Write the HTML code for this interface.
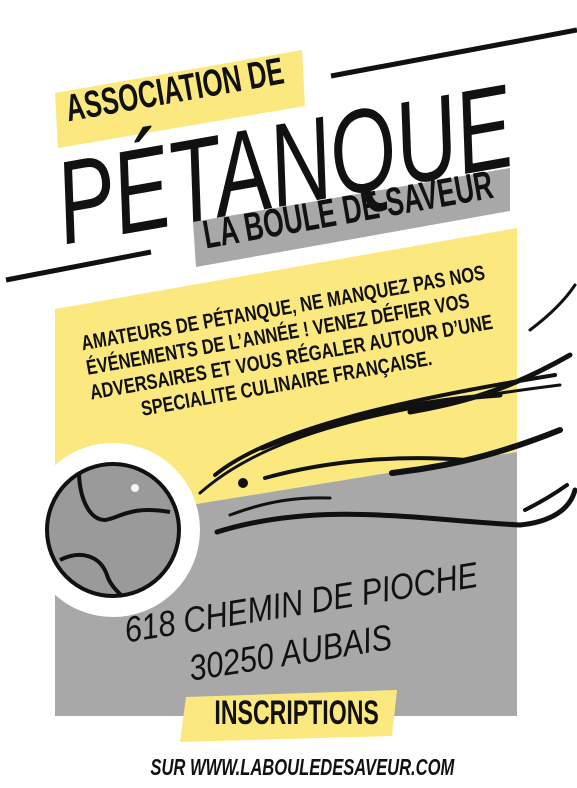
<!DOCTYPE html>
<html><head><meta charset="utf-8"><style>
html,body{margin:0;padding:0}
body{width:577px;height:788px;position:relative;overflow:hidden;background:#fff;font-family:"Liberation Sans",sans-serif}
.abs{position:absolute}
.t{position:absolute;white-space:nowrap;color:#111;text-align:center}
</style></head><body>
<svg class="abs" style="left:0;top:0" width="577" height="788">
  <polygon points="55,309 517,228 517,452 55,527" fill="#fbe97f"/>
  <polygon points="55,527 517,452 517,716 55,716" fill="#a8a8a8"/>
  <line x1="331" y1="76" x2="577" y2="30" stroke="#111" stroke-width="5"/>
  <line x1="6" y1="280" x2="151" y2="252" stroke="#111" stroke-width="5"/>
  <polygon points="55,93 302,50 305,106 58,148" fill="#fbe97f"/>
  <polygon points="193,222 510,168 510,211 196,267" fill="#a8a8a8"/>
  <polygon points="186,697 397,690 392,736 180,742" fill="#fbe97f"/>
  <g fill="none" stroke="#111" stroke-linecap="round">
    <path d="M200,493 C260,440 360,410 560,385" stroke-width="3"/>
    <path d="M215,475 C270,430 400,400 555,375" stroke-width="4"/>
    <path d="M262,448 C330,420 420,400 500,395" stroke-width="5"/>
    <path d="M265,478 C330,460 400,455 466,460" stroke-width="4"/>
    <path d="M392,473 C430,468 480,462 560,430" stroke-width="6"/>
    <path d="M230,515 C270,500 300,497 330,498" stroke-width="3"/>
    <path d="M217,532 C320,500 420,520 520,525 C550,522 570,510 575,490" stroke-width="5"/>
    <path d="M525,510 C545,500 560,490 567,485" stroke-width="4"/>
    <path d="M410,412 C450,405 500,395 570,355" stroke-width="5"/>
    <path d="M530,330 C550,315 565,300 575,285" stroke-width="3"/>
  </g>
  <circle cx="243" cy="483" r="5" fill="#111"/>
  <circle cx="113" cy="530" r="87" fill="#fff"/>
  <circle cx="113" cy="530" r="66" fill="#9a9a9a" stroke="#111" stroke-width="4"/>
  <path d="M79,474 C80,500 90,520 105,520 C120,518 130,505 170,512" fill="none" stroke="#111" stroke-width="4"/>
  <path d="M60,560 C80,550 100,555 107,575 C110,585 118,592 122,596" fill="none" stroke="#111" stroke-width="4"/>
  <circle cx="135" cy="488" r="4" fill="#fff" opacity=".9"/>
</svg>
<div class="t" style="left:20px;top:72px;width:280px;font-size:38px;transform:rotate(-10deg) scaleX(.68);font-weight:bold">ASSOCIATION DE</div>
<div class="t" style="left:-27px;top:110px;width:580px;font-size:118px;line-height:118px;font-style:italic;transform:rotate(-10deg) scaleX(.72)">PÉTANQUE</div>
<div class="t" style="left:168px;top:202px;width:340px;font-size:40px;font-weight:bold;transform:rotate(-10deg) scaleX(.66);transform-origin:30% 50%">LA BOULE DE SAVEUR</div>
<div class="t" style="left:30px;top:297px;width:500px;font-size:21px;line-height:25px;font-weight:bold;transform:rotate(-10deg) scaleX(.78)">AMATEURS DE PÉTANQUE, NE MANQUEZ PAS NOS<br>ÉVÉNEMENTS DE L’ANNÉE ! VENEZ DÉFIER VOS<br>ADVERSAIRES ET VOUS RÉGALER AUTOUR D’UNE<br>SPECIALITE CULINAIRE FRANÇAISE.</div>
<div class="t" style="left:95px;top:585px;width:370px;font-size:36px;font-style:italic;transform:rotate(-9deg) scaleX(.85)">618 CHEMIN DE PIOCHE</div>
<div class="t" style="left:170px;top:632px;width:240px;font-size:36px;font-style:italic;transform:rotate(-9deg) scaleX(.85)">30250 AUBAIS</div>
<div class="t" style="left:180px;top:694px;width:215px;font-size:34px;font-weight:bold;transform:scaleX(.68)">INSCRIPTIONS</div>
<div class="t" style="left:100px;top:754px;width:360px;font-size:23px;font-weight:bold;font-style:italic;transform:scaleX(.72)">SUR WWW.LABOULEDESAVEUR.COM</div>
</body></html>
